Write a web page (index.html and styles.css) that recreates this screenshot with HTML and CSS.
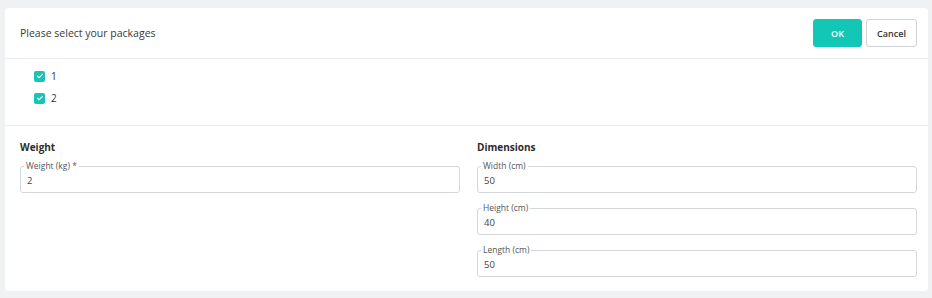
FILE: index.html
```html
<!DOCTYPE html>
<html lang="en">
<head>
    <meta charset="UTF-8">
    <meta name="viewport" content="width=device-width, initial-scale=1.0">
    <title>Select packages</title>
    <link rel="stylesheet" href="styles.css">
</head>
<body>
    <div class="card">
        <header class="card-header">
            <h1 class="title">Please select your packages</h1>
            <div class="actions">
                <button class="btn btn-primary">OK</button>
                <button class="btn btn-default">Cancel</button>
            </div>
        </header>

        <section class="packages">
            <label class="check">
                <span class="box"><svg viewBox="0 0 12 12" width="8" height="8"><path d="M2.2 6.2 4.8 8.6 9.8 3.6" fill="none" stroke="#fff" stroke-width="1.6" stroke-linecap="round" stroke-linejoin="round"/></svg></span>
                <span>1</span>
            </label>
            <label class="check">
                <span class="box"><svg viewBox="0 0 12 12" width="8" height="8"><path d="M2.2 6.2 4.8 8.6 9.8 3.6" fill="none" stroke="#fff" stroke-width="1.6" stroke-linecap="round" stroke-linejoin="round"/></svg></span>
                <span>2</span>
            </label>
        </section>

        <section class="details">
            <div class="column">
                <h2>Weight</h2>
                <fieldset class="field">
                    <legend>Weight (kg) *</legend>
                    <input type="text" value="2">
                </fieldset>
            </div>
            <div class="column">
                <h2>Dimensions</h2>
                <fieldset class="field">
                    <legend>Width (cm)</legend>
                    <input type="text" value="50">
                </fieldset>
                <fieldset class="field">
                    <legend>Height (cm)</legend>
                    <input type="text" value="40">
                </fieldset>
                <fieldset class="field">
                    <legend>Length (cm)</legend>
                    <input type="text" value="50">
                </fieldset>
            </div>
        </section>
    </div>
</body>
</html>
```

FILE: styles.css
```css
body {
    margin: 0;
    padding: 8px 4px 7px 5px;
    background: #f0f1f3;
    font-family: "Open Sans", "Noto Sans", sans-serif;
    color: #333;
}

.card {
    background: #fff;
    border-radius: 3px;
    height: 283px;
    box-sizing: border-box;
}

.card-header {
    display: flex;
    align-items: center;
    justify-content: space-between;
    height: 50px;
    padding: 0 11px 0 15px;
    border-bottom: 1px solid #ebedf0;
}

.title {
    margin: 0;
    font-size: 10.5px;
    font-weight: 400;
    color: #3a3a3a;
}

.actions {
    display: flex;
    gap: 4px;
}

.btn {
    font-family: inherit;
    font-size: 9px;
    font-weight: 600;
    height: 28px;
    border-radius: 3px;
    cursor: pointer;
}

.btn-primary {
    width: 49px;
    background: #12c7b6;
    border: 1px solid #12c7b6;
    color: #fff;
}

.btn-default {
    width: 51px;
    background: #fff;
    border: 1px solid #cfd2d6;
    color: #333;
}

.packages {
    height: 67px;
    padding: 6px 0 0 29px;
    box-sizing: border-box;
    border-bottom: 1px solid #ebedf0;
    display: flex;
    flex-direction: column;
}

.check {
    display: flex;
    align-items: center;
    gap: 6px;
    height: 22px;
    font-size: 10px;
    color: #333;
}

.box {
    width: 11px;
    height: 11px;
    border-radius: 2px;
    background: #17c4b5;
    display: flex;
    align-items: center;
    justify-content: center;
}

.details {
    display: grid;
    grid-template-columns: 1fr 1fr;
    column-gap: 17px;
    padding: 13px 11px 0 15px;
}

.column h2 {
    margin: 0 0 6px;
    font-size: 10px;
    line-height: 16px;
    font-weight: 700;
    color: #2c2c2c;
}

.field {
    margin: 0 0 10px;
    padding: 1px 6px 4px;
    border: 1px solid #d3d6da;
    border-radius: 3px;
    min-width: 0;
}

.field legend {
    margin-left: -3px;
    padding: 0 2px;
    font-size: 8.5px;
    line-height: 10px;
    color: #555;
}

.field input {
    display: block;
    width: 100%;
    height: 16px;
    padding: 0;
    border: 0;
    outline: none;
    font-family: inherit;
    font-size: 9.5px;
    color: #444;
    background: transparent;
}
```
